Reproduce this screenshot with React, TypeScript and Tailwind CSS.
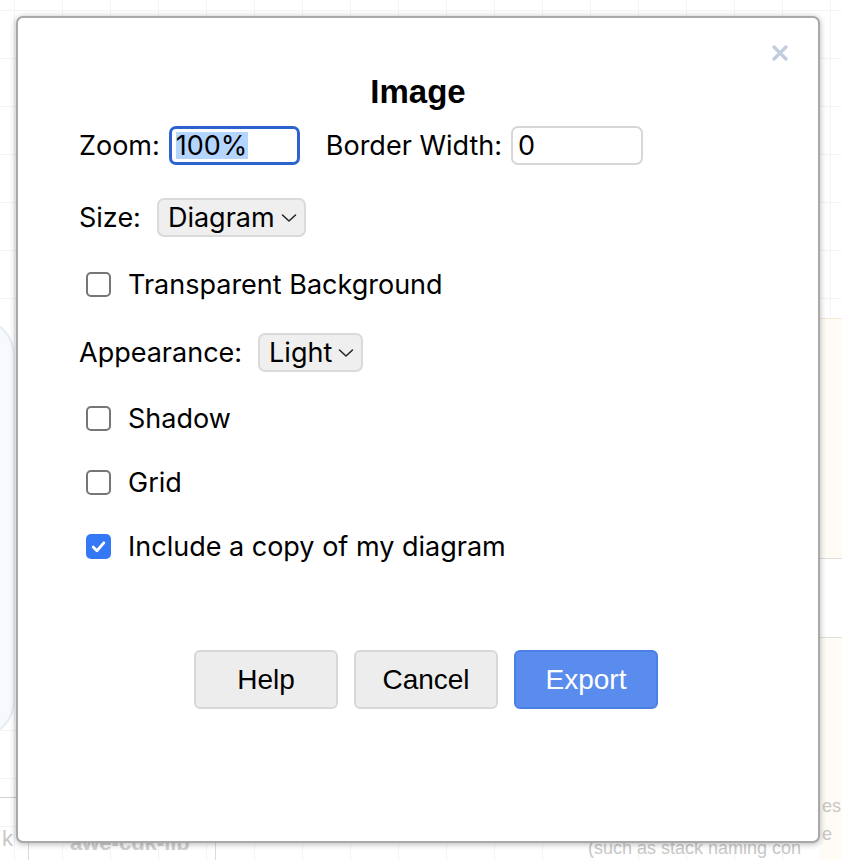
import React from 'react';

const label = "font-['Inter','Noto_Sans',sans-serif] text-[27px] text-black leading-none";

function Checkbox({ checked }: { checked?: boolean }) {
  if (checked) {
    return (
      <span className="w-[25px] h-[25px] rounded-[5px] bg-[#3478f6] flex items-center justify-center">
        <svg width="17" height="17" viewBox="0 0 16 16" fill="none">
          <path d="M3 8.5 L6.5 12 L13 4.5" stroke="white" strokeWidth="2.6" strokeLinecap="round" strokeLinejoin="round" />
        </svg>
      </span>
    );
  }
  return <span className="w-[25px] h-[25px] rounded-[5px] border-2 border-[#767676] bg-white" />;
}

function CheckRow({ text, checked, className }: { text: string; checked?: boolean; className: string }) {
  return (
    <div className={`flex items-center h-[39px] pl-[7px] gap-[17px] ${className}`}>
      <Checkbox checked={checked} />
      <span className={label}>{text}</span>
    </div>
  );
}

function Select({ value }: { value: string }) {
  return (
    <div className="h-[39px] rounded-[7px] bg-[#efefef] border-2 border-[#dadada] flex items-center gap-[6px] pl-[9px] pr-[7px]">
      <span className={label}>{value}</span>
      <svg width="16" height="10" viewBox="0 0 16 10" fill="none">
        <path d="M1.5 2 L8 8 L14.5 2" stroke="#222" strokeWidth="1.5" strokeLinecap="round" strokeLinejoin="round" />
      </svg>
    </div>
  );
}

export default function App() {
  return (
    <div className="relative w-[842px] h-[860px] overflow-hidden bg-white">
      {/* faded canvas behind the dialog */}
      <div className="absolute inset-0 bg-[linear-gradient(to_right,#f4f4f4_1px,transparent_1px),linear-gradient(to_bottom,#f4f4f4_1px,transparent_1px)] bg-[size:48px_48px] bg-[position:14px_10px]" />
      <div className="absolute left-[-60px] top-[318px] w-[75px] h-[420px] rounded-[40px] border-2 border-[#e6ebf5] bg-[#f7f9fd]" />
      <div className="absolute left-[820px] top-[318px] w-[40px] h-[240px] bg-[#fffcf5] border-t border-[#f2ead6]" />
      <div className="absolute left-[820px] top-[558px] w-[40px] h-[80px] border-y border-[#dedede] bg-white" />
      <div className="absolute left-[820px] top-[638px] w-[40px] h-[222px] bg-[#fffcf5]" />
      <div className="absolute left-[0px] top-[797px] w-[16px] h-[1px] bg-[#d0d0d0]" />
      <div className="absolute left-[28px] top-[818px] w-[188px] h-[60px] border-x border-[#dcdcdc]" />
      <span className="absolute left-[70px] top-[826px] font-['Liberation_Sans',sans-serif] font-bold text-[22px] text-[#d0d0d0]">awe-cdk-lib</span>
      <span className="absolute left-[588px] top-[838px] font-['Liberation_Sans',sans-serif] text-[18px] leading-[20px] text-[#c8c8c8] whitespace-nowrap">(such as stack naming con</span>
      <span className="absolute left-[822px] top-[792px] font-['Liberation_Sans',sans-serif] text-[18px] text-[#c8c8c8] leading-[28px]">es<br />e</span>
      <span className="absolute left-[2px] top-[822px] font-['Liberation_Sans',sans-serif] text-[22px] text-[#c8c8c8]">k</span>

      {/* dialog */}
      <div className="absolute left-[16px] top-[16px] w-[804px] h-[827px] rounded-[7px] border-2 border-[#a9a9a9] bg-white shadow-[0_1px_6px_rgba(0,0,0,0.3)]">
        <button className="absolute right-[28px] top-[25px] w-[20px] h-[20px] flex items-center justify-center">
          <svg width="18" height="18" viewBox="0 0 18 18" fill="none">
            <path d="M3 3 L15 15 M15 3 L3 15" stroke="#c2cde0" strokeWidth="3.4" strokeLinecap="round" />
          </svg>
        </button>

        <div className="flex flex-col pl-[61px] pt-[54px]">
          <h1 className="text-center pr-[61px] font-['Liberation_Sans',sans-serif] font-bold text-[33px] leading-[40px] text-black">
            Image
          </h1>

          <div className="flex items-center h-[39px] mt-[14px]">
            <span className={label}>Zoom:</span>
            <div className="ml-[9px] w-[131px] h-[39px] rounded-[7px] border-[3px] border-[#2c63cf] flex items-center pl-[4px]">
              <span className={`${label} bg-[#b4d5fd] pr-[1px]`}>100%</span>
            </div>
            <span className={`${label} ml-[26px]`}>Border Width:</span>
            <div className="ml-[9px] w-[132px] h-[39px] rounded-[7px] border-2 border-[#d7d7d7] flex items-center pl-[5px]">
              <span className={label}>0</span>
            </div>
          </div>

          <div className="flex items-center h-[39px] mt-[33px] gap-[16px]">
            <span className={label}>Size:</span>
            <Select value="Diagram" />
          </div>

          <CheckRow text="Transparent Background" className="mt-[28px]" />

          <div className="flex items-center h-[39px] mt-[29px] gap-[16px]">
            <span className={label}>Appearance:</span>
            <Select value="Light" />
          </div>

          <CheckRow text="Shadow" className="mt-[27px]" />
          <CheckRow text="Grid" className="mt-[25px]" />
          <CheckRow text="Include a copy of my diagram" checked className="mt-[25px]" />

          <div className="flex justify-center gap-[16px] mt-[84px] pr-[45px] font-['Liberation_Sans',sans-serif] text-[28px]">
            <button className="w-[144px] h-[59px] rounded-[6px] bg-[#ededed] border-2 border-[#d8d8d8] text-black">Help</button>
            <button className="w-[144px] h-[59px] rounded-[6px] bg-[#ededed] border-2 border-[#d8d8d8] text-black">Cancel</button>
            <button className="w-[144px] h-[59px] rounded-[6px] bg-[#5a8cee] border-2 border-[#4a7fe6] text-white">Export</button>
          </div>
        </div>
      </div>
    </div>
  );
}
